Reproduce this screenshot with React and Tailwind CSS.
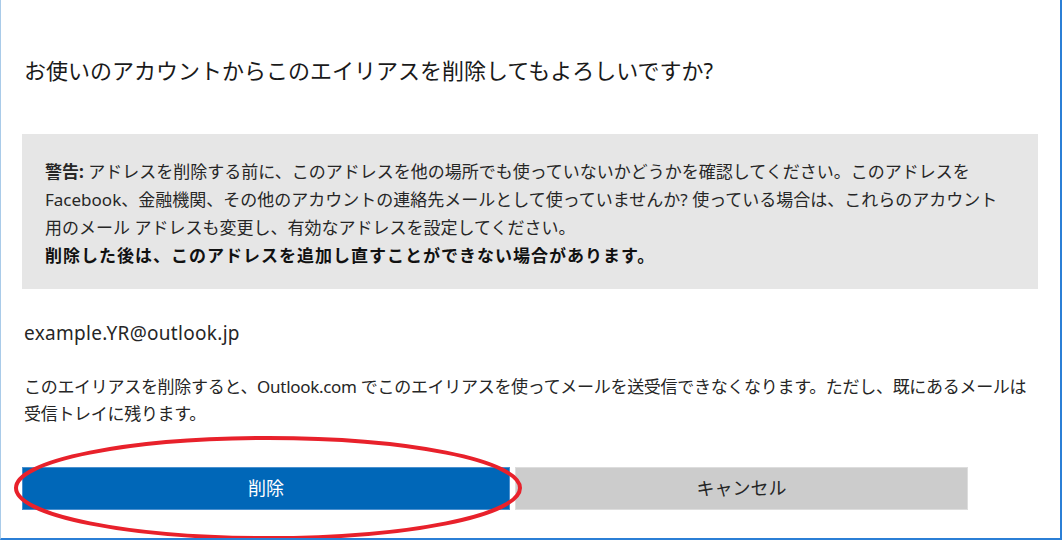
export default function App() {
  return (
    <div
      className="relative w-[1062px] h-[540px] overflow-hidden bg-white border-l border-l-[#a9cbe9] border-r-2 border-r-[#2b7fd6] border-b-2 border-b-[#2b7fd6] text-[#262626]"
      style={{ fontFamily: '"Noto Sans", "Noto Sans CJK JP", sans-serif' }}
    >
      <div className="pl-[21px] pr-[22px]">
        {/* Title */}
        <h1 className="pt-[54px] pl-[2px] text-[22px] leading-[32px] font-normal text-[#1a1a1a] whitespace-nowrap">
          お使いのアカウントからこのエイリアスを削除してもよろしいですか?
        </h1>

        {/* Warning box */}
        <div className="mt-[48px] w-[1016px] bg-[#e6e6e6] pl-[23px] pr-4 pt-[24px] pb-[19px] text-[17px] leading-[28px] whitespace-nowrap">
          <p>
            <span className="font-bold">警告:</span>{" "}
            アドレスを削除する前に、このアドレスを他の場所でも使っていないかどうかを確認してください。このアドレスを
            <br />
            Facebook、金融機関、その他のアカウントの連絡先メールとして使っていませんか? 使っている場合は、これらのアカウント
            <br />
            用のメール アドレスも変更し、有効なアドレスを設定してください。
          </p>
          <p className="font-bold text-[#111] tracking-[1px]">
            削除した後は、このアドレスを追加し直すことができない場合があります。
          </p>
        </div>

        {/* Alias */}
        <p className="mt-[30px] pl-[2px] text-[19px] leading-[28px] tracking-[0.3px]">example.YR@outlook.jp</p>

        <p className="mt-[26px] pl-[2px] text-[17px] leading-[27px] whitespace-nowrap tracking-[-0.3px]">
          このエイリアスを削除すると、Outlook.com でこのエイリアスを使ってメールを送受信できなくなります。ただし、既にあるメールは
          <br />
          受信トレイに残ります。
        </p>

        {/* Buttons */}
        <div className="mt-[40px] flex gap-[5px]">
          <button className="w-[488px] h-[43px] bg-[#0067b8] border border-[#4a90cf] text-white text-[18px]">
            削除
          </button>
          <button className="w-[453px] h-[43px] bg-[#cccccc] border border-[#dddddd] text-[#262626] text-[18px]">
            キャンセル
          </button>
        </div>
      </div>

      {/* Red annotation ellipse */}
      <svg
        className="absolute left-0 top-0 pointer-events-none"
        width="1062"
        height="540"
        viewBox="0 0 1062 540"
      >
        <ellipse
          cx="267"
          cy="488"
          rx="252"
          ry="50"
          fill="none"
          stroke="#e8212b"
          strokeWidth="4"
        />
      </svg>
    </div>
  );
}
